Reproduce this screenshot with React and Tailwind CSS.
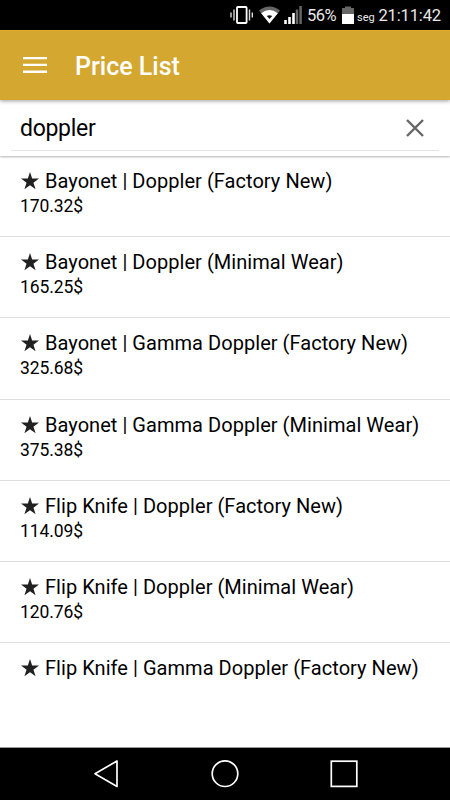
const items = [
  ['Bayonet | Doppler (Factory New)', '170.32$'],
  ['Bayonet | Doppler (Minimal Wear)', '165.25$'],
  ['Bayonet | Gamma Doppler (Factory New)', '325.68$'],
  ['Bayonet | Gamma Doppler (Minimal Wear)', '375.38$'],
  ['Flip Knife | Doppler (Factory New)', '114.09$'],
  ['Flip Knife | Doppler (Minimal Wear)', '120.76$'],
  ['Flip Knife | Gamma Doppler (Factory New)', ''],
];

function StatusBar() {
  return (
    <div className="flex h-[30px] shrink-0 items-center bg-black pl-[230px] text-[#e8e8e8]">
      <svg className="h-[30px] w-[77px] shrink-0" viewBox="230 0 77 30">
        <path d="M231 12.5v5M234 9.5v11M249.5 9.5v11M252.3 12.5v5" stroke="#d8d8d8" strokeWidth="1.4" />
        <rect x="237" y="7" width="9.6" height="16" rx=".8" fill="none" stroke="#fff" strokeWidth="1.8" />
        <path d="M259 10.5Q269.5 2.5 280 10.5L269.500 23.500Z" fill="#666" />
        <path d="M261.200 13.200Q269.500 7 277.800 13.200L269.500 23.500Z" fill="#fff" />
        <path d="M266.800 16Q269.500 14.600 272.200 16L269.500 19Z" fill="#111" />
        <path d="M285.500 20v4M289.500 17v7M293.500 13v11" stroke="#fff" strokeWidth="2.6" />
        <path d="M297 9.500V24M300.600 6v18" stroke="#666" strokeWidth="2.500" />
      </svg>
      <span className="w-[35px] shrink-0 pt-px text-[16.500px] leading-[30px] tracking-[-0.5px]">56%</span>
      <svg className="h-[30px] w-[15px] shrink-0" viewBox="342 0 15 30">
        <path d="M345 6.500h6v1.500h3v6h-12v-6h3z" fill="#666" />
        <path d="M342 14h12v10h-12z" fill="#fff" />
      </svg>
      <span className="w-[21.500px] shrink-0 pt-[5px] text-[11px] leading-[25px]">seg</span>
      <span className="shrink-0 pt-px text-[16.500px] leading-[30px] tracking-[-0.15px]">21:11:42</span>
    </div>
  );
}

function NavBar() {
  return (
    <nav className="flex h-[53px] shrink-0 border-t border-[#999] bg-black">
      <svg className="h-[52px] w-full" viewBox="0 748 450 52" fill="none" stroke="#fff" strokeWidth="1.7">
        <path d="M95 773.700L117 761v25.500Z" strokeLinejoin="round" />
        <circle cx="225" cy="773.700" r="12.800" />
        <rect x="331.300" y="761.200" width="25.500" height="25.200" />
      </svg>
    </nav>
  );
}

export default function App() {
  return (
    <div className="flex h-[800px] w-[450px] flex-col overflow-hidden bg-white font-['Roboto',sans-serif] text-black">
      <StatusBar />
      <header className="relative z-20 flex h-[70px] shrink-0 items-center border-t border-[#e0ad2f] bg-[#d4a830] pl-[23px] shadow-[0_1px_4px_rgba(0,0,0,0.4)]">
        <svg className="h-[17px] w-[24px]" viewBox="0 0 24 17" fill="#fff">
          <path d="M0 0h24v2.300H0zM0 6.800h24v2.300H0zM0 13.600h24v2.300H0z" />
        </svg>
        <h1 className="pt-[3px] pl-[28px] text-[25px] leading-[30px] font-medium text-white">Price List</h1>
      </header>
      <div className="relative z-10 flex h-[56px] shrink-0 flex-col bg-white px-[11px] shadow-[0_1px_2px_rgba(0,0,0,0.3)]">
        <div className="flex h-[51px] items-center justify-between border-b border-[#e4e4e4] pr-[15px] pl-[9px]">
          <span className="pt-[7px] text-[23px] leading-[30px] tracking-[-0.3px]">doppler</span>
          <svg className="mt-[5px] h-[18px] w-[18px]" viewBox="0 0 18 18" stroke="#666" strokeWidth="2.400">
            <path d="M1 1l16 16M17 1L1 17" />
          </svg>
        </div>
      </div>
      <main className="min-h-0 flex-1 overflow-hidden">
        {items.map(([name, price]) => (
          <div key={name} className="h-[81.2px] border-b border-[#dedede] pt-[12px] pl-[21px] last:border-0">
            <div className="flex h-[26px] items-center">
              <svg className="h-[18px] w-[18px] shrink-0" viewBox="0 0 18 18" fill="#212121">
                <path d="M9 0l2.150 6.600H18l-5.550 4.050L14.600 17.300 9 13.200 3.400 17.300l2.150-6.650L0 6.600h6.850z" />
              </svg>
              <span className="pl-[6px] text-[20px] leading-[26px] tracking-[0.045px] whitespace-nowrap">{name}</span>
            </div>
            <div className="ml-[-1px] text-[17.500px] leading-[24px] tracking-[-0.1px]">{price}</div>
          </div>
        ))}
      </main>
      <NavBar />
    </div>
  );
}
